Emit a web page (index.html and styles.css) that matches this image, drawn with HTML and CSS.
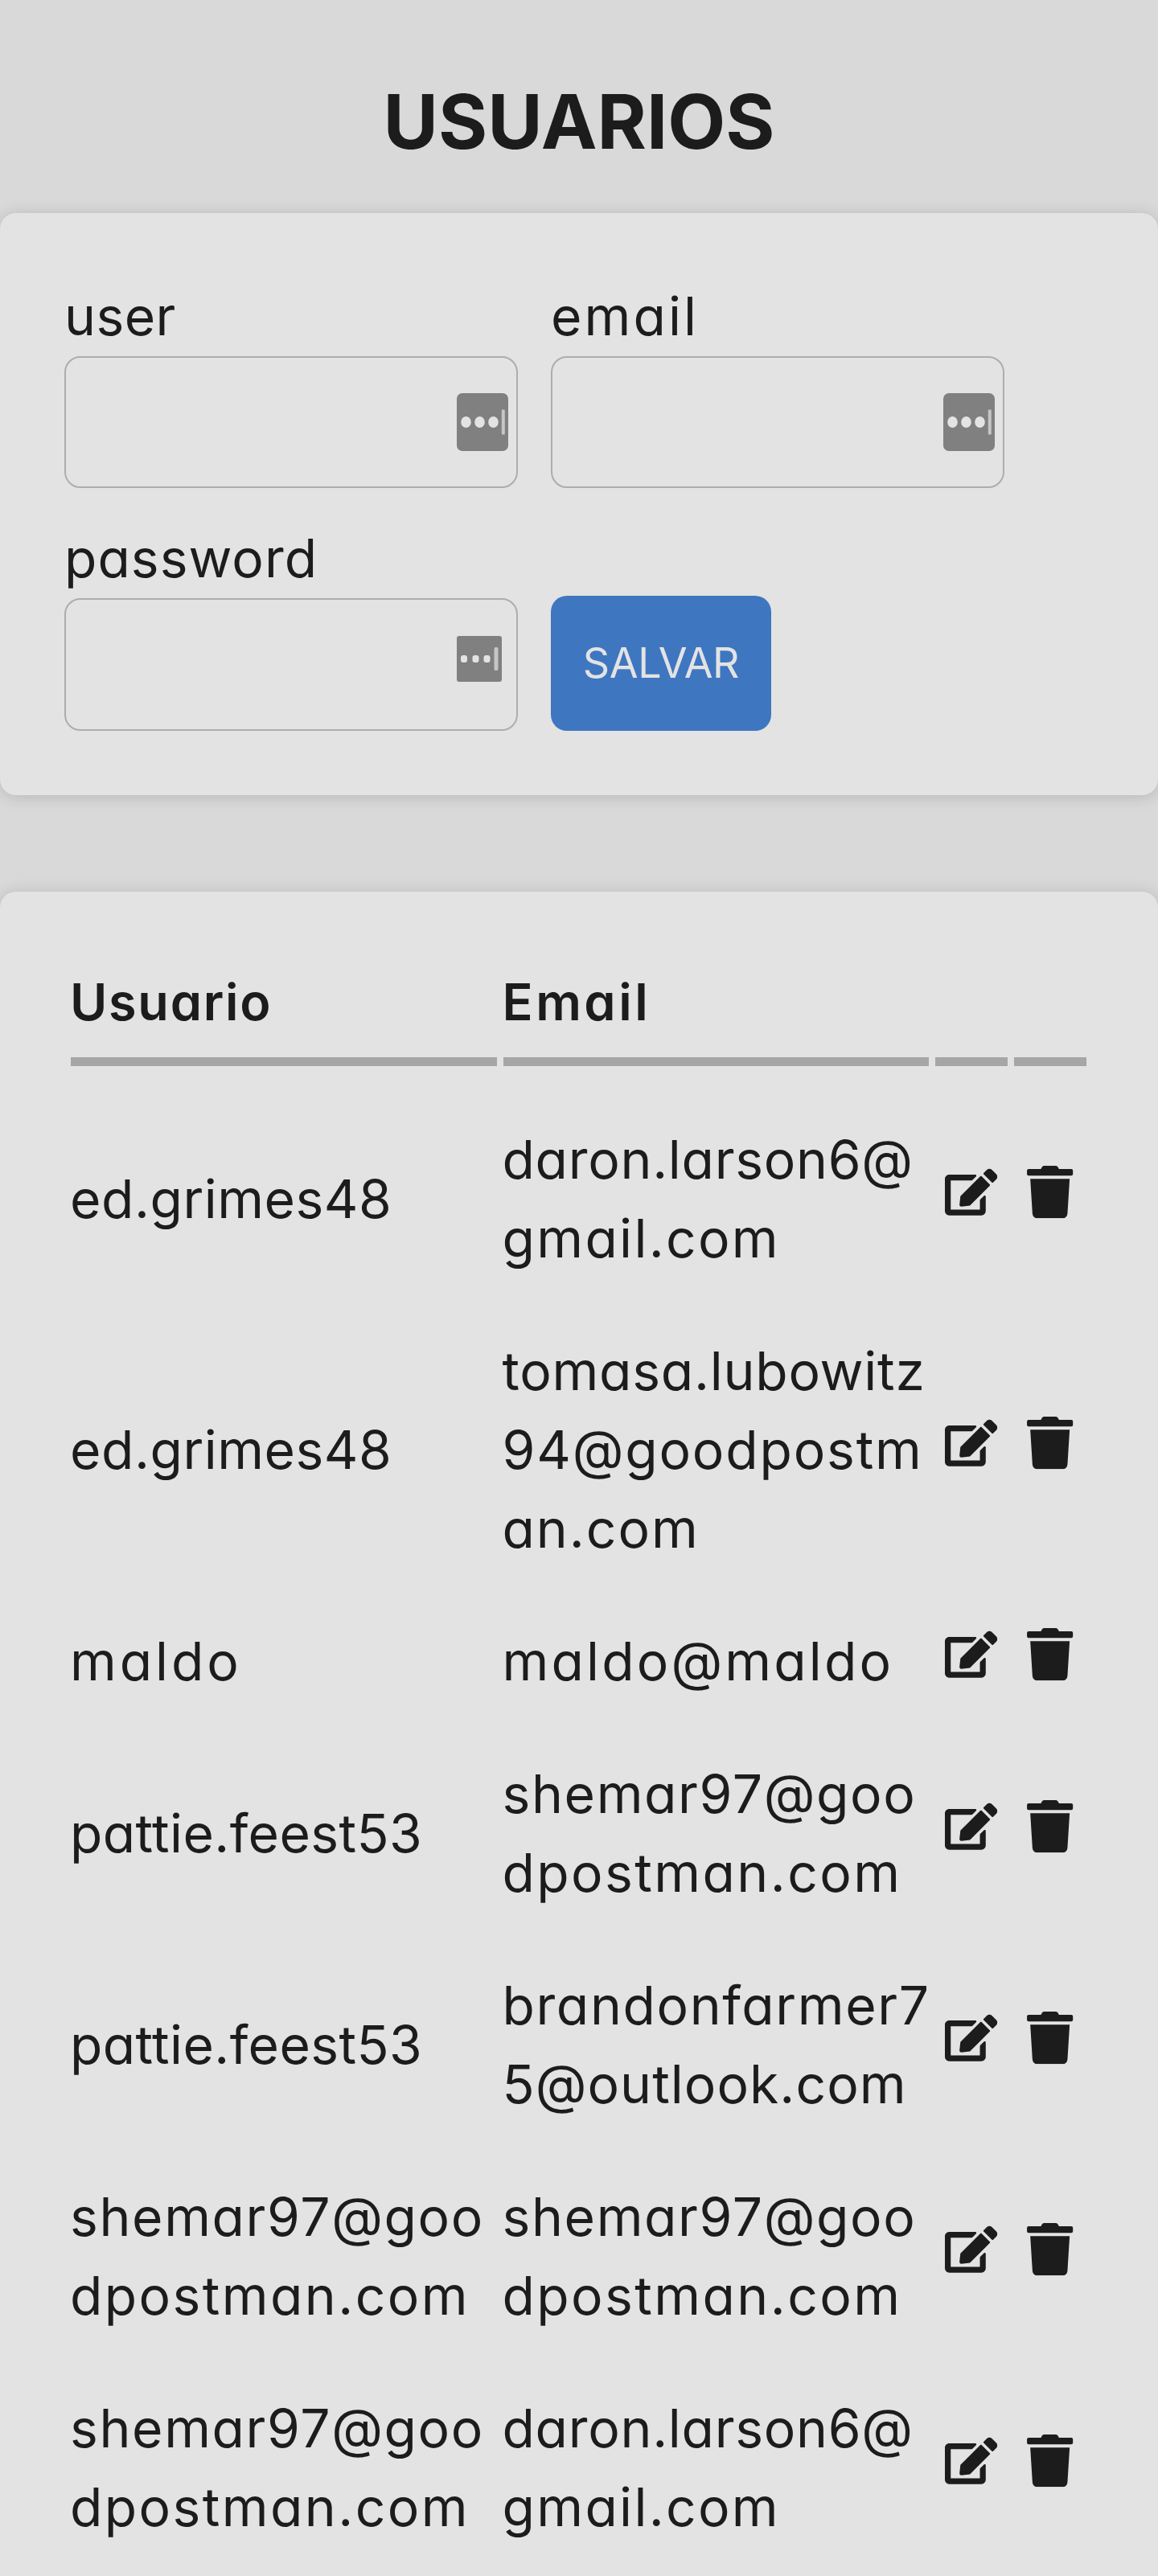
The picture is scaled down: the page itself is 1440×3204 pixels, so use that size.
FILE: index.html
```html
<!DOCTYPE html>
<html lang="pt">
<head>
<meta charset="utf-8">
<title>Usuarios</title>
<link rel="stylesheet" href="styles.css">
</head>
<body>
<svg width="0" height="0" class="sprite">
  <symbol id="edit" viewBox="0 0 576 512"><path d="M402.6 83.2l90.2 90.2c3.8 3.8 3.8 10 0 13.8L274.4 405.6l-92.8 10.3c-12.4 1.4-22.9-9.1-21.5-21.5l10.3-92.8L388.8 83.2c3.8-3.8 10-3.8 13.8 0zm162-22.9l-48.8-48.8c-15.2-15.2-39.9-15.2-55.2 0l-35.4 35.4c-3.8 3.8-3.8 10 0 13.8l90.2 90.2c3.8 3.8 10 3.8 13.8 0l35.4-35.4c15.2-15.3 15.2-40 0-55.2zM384 346.2V448H64V128h229.8c3.2 0 6.2-1.300 8.500-3.500l40-40c7.600-7.600 2.200-20.500-8.500-20.500H48C21.500 64 0 85.500 0 112v352c0 26.500 21.500 48 48 48h352c26.500 0 48-21.500 48-48V306.200c0-10.700-12.900-16-20.500-8.500l-40 40c-2.200 2.300-3.500 5.300-3.500 8.500z"/></symbol>
  <symbol id="trash" viewBox="0 0 448 512"><path d="M432 32H312l-9.400-18.700A24 24 0 0 0 281.100 0H166.800a23.720 23.720 0 0 0-21.400 13.300L136 32H16A16 16 0 0 0 0 48v32a16 16 0 0 0 16 16h416a16 16 0 0 0 16-16V48a16 16 0 0 0-16-16zM32 128l21.200 339a48 48 0 0 0 47.900 45h245.800a48 48 0 0 0 47.900-45L416 128z"/></symbol>
</svg>
<h1 class="title">USUARIOS</h1>

<form class="card form">
  <div class="field">
    <label class="label w-user" for="user">user</label>
    <div class="control">
      <input class="input" id="user">
      <svg class="autofill" viewBox="0 0 64 72"><rect width="64" height="72" rx="7"/><g class="mark"><ellipse cx="11.500" cy="36" rx="6.300" ry="7"/><ellipse cx="28.500" cy="36" rx="6.300" ry="7"/><ellipse cx="45.500" cy="36" rx="6.300" ry="7"/></g><rect class="caret" x="55.800" y="20.500" width="4" height="31" rx="1"/></svg>
    </div>
  </div>
  <div class="field">
    <label class="label w-email" for="email">email</label>
    <div class="control">
      <input class="input" id="email">
      <svg class="autofill" viewBox="0 0 64 72"><rect width="64" height="72" rx="7"/><g class="mark"><ellipse cx="11.500" cy="36" rx="6.300" ry="7"/><ellipse cx="28.500" cy="36" rx="6.300" ry="7"/><ellipse cx="45.500" cy="36" rx="6.300" ry="7"/></g><rect class="caret" x="55.800" y="20.500" width="4" height="31" rx="1"/></svg>
    </div>
  </div>
  <div class="field">
    <label class="label w-password" for="password">password</label>
    <div class="control">
      <input class="input" id="password" type="password">
      <svg class="autofill small" viewBox="0 0 56 57"><rect width="56" height="57" rx="3"/><g class="mark"><rect x="5" y="24" width="8" height="9" rx="3"/><rect x="19.500" y="24" width="8" height="9" rx="3"/><rect x="33.500" y="24" width="8" height="9" rx="3"/></g><rect class="caret" x="46.500" y="14" width="5" height="29" rx="2"/></svg>
    </div>
  </div>
  <button class="button" type="button">SALVAR</button>
</form>

<section class="card list">
<table class="table">
  <colgroup><col class="col-text"><col class="col-text"><col class="col-icon"><col class="col-icon"></colgroup>
  <thead>
    <tr><th><span class="w-usuario">Usuario</span></th><th><span class="w-email-head">Email</span></th><th></th><th></th></tr>
  </thead>
  <tbody>
    <tr>
      <td><span class="w-ed">ed.grimes48</span></td>
      <td><span class="w-daron">daron.larson6@</span><span class="w-gmail">gmail.com</span></td>
      <td><svg class="icon"><use href="#edit"/></svg></td><td><svg class="icon"><use href="#trash"/></svg></td>
    </tr>
    <tr>
      <td><span class="w-ed">ed.grimes48</span></td>
      <td><span class="w-tomasa">tomasa.lubowitz</span><span class="w-94">94@goodpostm</span><span class="w-an">an.com</span></td>
      <td><svg class="icon"><use href="#edit"/></svg></td><td><svg class="icon"><use href="#trash"/></svg></td>
    </tr>
    <tr>
      <td><span class="w-maldo">maldo</span></td>
      <td><span class="w-maldo-mail">maldo@maldo</span></td>
      <td><svg class="icon"><use href="#edit"/></svg></td><td><svg class="icon"><use href="#trash"/></svg></td>
    </tr>
    <tr>
      <td><span class="w-pattie">pattie.feest53</span></td>
      <td><span class="w-shemar">shemar97@goo</span><span class="w-postman">dpostman.com</span></td>
      <td><svg class="icon"><use href="#edit"/></svg></td><td><svg class="icon"><use href="#trash"/></svg></td>
    </tr>
    <tr>
      <td><span class="w-pattie">pattie.feest53</span></td>
      <td><span class="w-brandon">brandonfarmer7</span><span class="w-outlook">5@outlook.com</span></td>
      <td><svg class="icon"><use href="#edit"/></svg></td><td><svg class="icon"><use href="#trash"/></svg></td>
    </tr>
    <tr>
      <td><span class="w-shemar">shemar97@goo</span><span class="w-postman">dpostman.com</span></td>
      <td><span class="w-shemar">shemar97@goo</span><span class="w-postman">dpostman.com</span></td>
      <td><svg class="icon"><use href="#edit"/></svg></td><td><svg class="icon"><use href="#trash"/></svg></td>
    </tr>
    <tr>
      <td><span class="w-shemar">shemar97@goo</span><span class="w-postman">dpostman.com</span></td>
      <td><span class="w-daron">daron.larson6@</span><span class="w-gmail">gmail.com</span></td>
      <td><svg class="icon"><use href="#edit"/></svg></td><td><svg class="icon"><use href="#trash"/></svg></td>
    </tr>
  </tbody>
</table>
</section>
</body>
</html>
```
FILE: styles.css
```css
* { box-sizing: border-box; }

html, body { height: 3204px; overflow: hidden; }

body {
  margin: 0;
  padding-top: 78px;
  background: #d9d9d9;
  color: #1c1c1c;
  font-family: Inter, sans-serif;
  font-size: 66px;
  line-height: 98px;
  font-feature-settings: "cv11";
}

.sprite { display: block; }

.title {
  margin: 0 0 39.600px;
  font-size: 93.500px;
  line-height: 147px;
  font-weight: 650;
  text-align: center;
}

.card {
  background: #e3e3e3;
  border-radius: 20px;
  padding: 80px;
  box-shadow: 0 2px 20px rgba(0, 0, 0, .16);
}

.form {
  display: flex;
  flex-wrap: wrap;
  align-items: flex-end;
  gap: 39.400px 41px;
  margin-bottom: 120.500px;
}

.field { width: 564px; }

.label {
  display: block;
  line-height: 96px;
  padding: 0 0 2px;
}

.control { position: relative; height: 164.400px; }

.input {
  display: block;
  width: 100%;
  height: 100%;
  border: 2px solid #adadad;
  border-radius: 20px;
  background: transparent;
  font: inherit;
  padding: 0 40px;
}

/* Password manager badge laid over the input */
.autofill {
  position: absolute;
  top: 46.500px;
  right: 12.500px;
  width: 64px;
  height: 72px;
  fill: #808080;
}

.autofill.small { right: 20.500px; width: 56px; height: 57px; }
.mark { fill: #e3e3e3; }
.caret { fill: #c6c6c6; }

.button {
  width: 274px;
  height: 168px;
  border: 0;
  border-radius: 20px;
  padding: 0;
  background: #3e76c0;
  color: #e3e3e3;
  font: 400 52px/82px Inter, sans-serif;
  letter-spacing: -.400px;
}

.table {
  width: 1279px;
  table-layout: fixed;
  border-collapse: separate;
  border-spacing: 8px;
}

.col-icon { width: 90px; }

th {
  height: 129px;
  padding: 0 0 20px;
  border-bottom: 11px solid #a6a6a6;
  text-align: left;
  vertical-align: top;
  font-size: 63px;
  font-weight: 600;
}

td {
  padding: 59px 0 0;
  vertical-align: middle;
}

th span, td span { display: block; margin-left: -1px; white-space: nowrap; }

.icon {
  display: block;
  width: 65.300px;
  height: 65.300px;
  margin: 0 auto 16.600px;
  fill: #1c1c1c;
}

/* Tracking per line */
.w-user { letter-spacing: .400px; }
.w-email { letter-spacing: 3.100px; }
.w-password { letter-spacing: 1px; }
.w-usuario { letter-spacing: 1.700px; }
.w-email-head { letter-spacing: 3.500px; }
.w-ed { letter-spacing: .500px; }
.w-maldo { letter-spacing: 3.900px; }
.w-maldo-mail { letter-spacing: 3.150px; }
.w-pattie { letter-spacing: .400px; }
.w-shemar { letter-spacing: 1.600px; }
.w-postman { letter-spacing: 2.400px; }
.w-daron { letter-spacing: .700px; }
.w-gmail { letter-spacing: 2.300px; }
.w-tomasa { letter-spacing: .750px; }
.w-94 { letter-spacing: 1.800px; }
.w-an { letter-spacing: 1.950px; }
.w-brandon { letter-spacing: 1.600px; }
.w-outlook { letter-spacing: 1.050px; }
```
